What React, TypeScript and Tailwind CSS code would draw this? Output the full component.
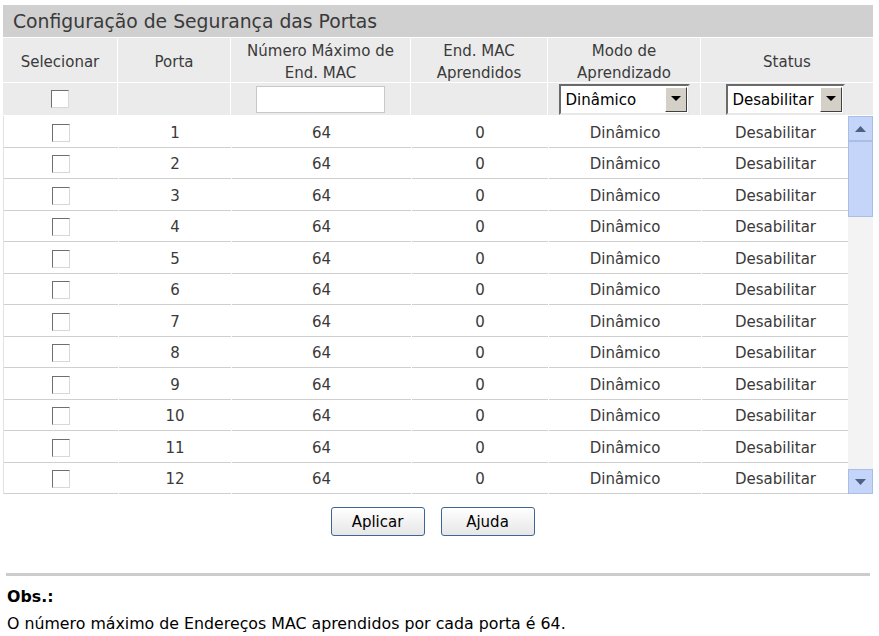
import React from 'react';

const FONT = { fontFamily: '"DejaVu Sans", Verdana, sans-serif' };

// only the 12 rows that show inside the scroll box
const ports = Array.from({ length: 12 }, (_, i) => i + 1);

const Check = () => (
    <span className="inline-block w-[18px] h-[18px] bg-white border border-t-[#6f6f6f] border-l-[#6f6f6f] border-r-[#d8d8d8] border-b-[#d8d8d8]" />
);

const FakeSelect = ({ value, width }: { value: string; width: string }) => (
    <div className={`${width} h-[31px] flex items-stretch bg-white border-2 border-t-[#6a6a6a] border-l-[#6a6a6a] border-r-[#e8e8e8] border-b-[#e8e8e8]`}>
        <span className="flex-1 flex items-center pl-[5px] pt-[2px] text-[15px] text-black">{value}</span>
        <span className="w-[22px] my-[1px] mr-[1px] flex items-center justify-center bg-[#d4d0c8] border border-t-white border-l-white border-r-[#404040] border-b-[#404040]">
            <svg width="10" height="6" viewBox="0 0 10 6"><path d="M0 0h10L5 5z" fill="#000" /></svg>
        </span>
    </div>
);

const ScrollBtn = ({ up }: { up?: boolean }) => (
    <div className="h-[25px] flex items-center justify-center bg-[#c5d5f9] border border-[#a9bde6]">
        <svg width="11" height="6" viewBox="0 0 11 6">
            <path d={up ? 'M0 6h11L5.5 0z' : 'M0 0h11L5.5 6z'} fill="#4d6185" />
        </svg>
    </div>
);

const Button = ({ children }: { children: React.ReactNode }) => (
    <button className="w-[94px] h-[29px] pt-[2px] rounded-[3px] border border-[#3c6694] bg-gradient-to-b from-white to-[#e6e6e6] text-[15px] text-black">
        {children}
    </button>
);

export default function App() {
    const cols = 'grid grid-cols-[114px_112px_179px_136px_152px_172px] gap-x-px';
    const bodyCols = 'grid grid-cols-[114px_112px_179px_136px_152px_147px] gap-x-px';
    return (
        <div className="w-[879px] h-[636px] bg-white text-[#333] overflow-hidden" style={FONT}>
            <div className="pt-[5px] pl-[3px] w-[873px]">
                <div className="h-[32px] bg-[#d0d0d0] flex items-center pl-[10px] pt-[2px] text-[18.8px] text-[#3a3a3a]">
                    Configuração de Segurança das Portas
                </div>
                <div className={`${cols} mt-px text-[15px] leading-[22px] text-[#3a3a3a]`}>
                    {['Selecionar', 'Porta', 'Número Máximo de End. MAC', 'End. MAC Aprendidos', 'Modo de Aprendizado', 'Status'].map((h, i) => (
                        <div key={i} className="h-[44px] pt-[3px] bg-[#ebebeb] flex items-center justify-center text-center px-1">
                            {i === 2 ? <span>Número Máximo de<br />End. MAC</span> : i === 3 ? <span>End. MAC<br />Aprendidos</span> : i === 4 ? <span>Modo de<br />Aprendizado</span> : h}
                        </div>
                    ))}
                </div>
                <div className={`${cols} mt-px`}>
                    <div className="h-[32px] bg-[#ebebeb] flex items-center justify-center"><Check /></div>
                    <div className="h-[32px] bg-[#ebebeb]" />
                    <div className="h-[32px] bg-[#ebebeb] flex items-center justify-center">
                        <input className="w-[129px] h-[27px] bg-white border border-[#c8c8c8] outline-none" />
                    </div>
                    <div className="h-[32px] bg-[#ebebeb]" />
                    <div className="h-[32px] bg-[#ebebeb] flex items-center justify-center">
                        <FakeSelect value="Dinâmico" width="w-[131px]" />
                    </div>
                    <div className="h-[32px] bg-[#ebebeb] flex items-center justify-center pr-[4px]">
                        <FakeSelect value="Desabilitar" width="w-[119px]" />
                    </div>
                </div>
                <div className="mt-px h-[378px] flex">
                    <div className="w-[845px] overflow-hidden border-l border-[#e2e2e2] text-[15px] text-[#3a3a3a]">
                        {ports.map((p) => (
                            <div key={p} className={bodyCols}>
                                {[<Check key="c" />, p, 64, 0, 'Dinâmico', 'Desabilitar'].map((v, i) => (
                                    <div key={i} className="h-[31.5px] pt-[3px] flex items-center justify-center border-b border-[#cfcfcf]">
                                        {v}
                                    </div>
                                ))}
                            </div>
                        ))}
                    </div>
                    <div className="w-[25px] flex flex-col bg-[#f3f3f3]">
                        <ScrollBtn up />
                        <div className="h-[76px] bg-[#c5d5f9] border border-[#a9bde6]" />
                        <div className="flex-1" />
                        <ScrollBtn />
                    </div>
                </div>
                <div className="mt-[13px] flex justify-center gap-[16px] pr-[11px]">
                    <Button>Aplicar</Button>
                    <Button>Ajuda</Button>
                </div>
                <div className="mt-[37px] ml-[3px] mr-[3px] h-[3px] bg-[#cccccc]" />
                <div className="mt-[7px] pl-[4px] text-[15.8px] text-black leading-[27px]">
                    <div className="font-bold">Obs.:</div>
                    <div>O número máximo de Endereços MAC aprendidos por cada porta é 64.</div>
                </div>
            </div>
        </div>
    );
}
